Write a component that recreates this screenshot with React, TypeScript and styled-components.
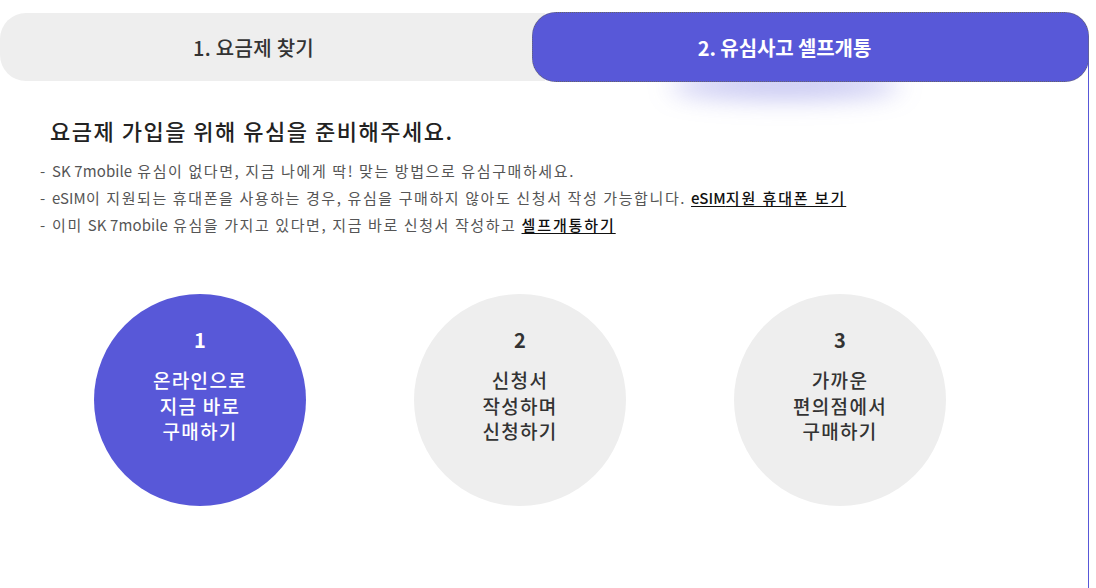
import styled, { createGlobalStyle } from 'styled-components';

const GlobalStyle = createGlobalStyle`
  html, body {
    margin: 0;
    padding: 0;
    background: #fff;
  }
  body {
    font-family: "Noto Sans CJK KR", "Noto Sans", sans-serif;
    color: #333;
  }
`;

const Page = styled.div`
  width: 1096px;
  height: 588px;
  overflow: hidden;
  padding-top: 12px;
  box-sizing: border-box;
`;

const Tabs = styled.div`
  display: flex;
  position: relative;
  z-index: 2;
`;

const Tab = styled.div<{ $active?: boolean }>`
  position: relative;
  box-sizing: border-box;
  height: 70px;
  display: flex;
  align-items: center;
  justify-content: center;
  font-size: 20px;
  ${({ $active }) =>
    $active
      ? `
    flex: 0 0 557px;
    margin-left: -13px;
    padding-right: 52px;
    background: #5858d8;
    color: #fff;
    font-weight: 700;
    letter-spacing: -0.1px;
    border: 1px dotted #666;
    border-radius: 24px;
    &::after {
      content: '';
      position: absolute;
      left: calc(50% - 26px);
      bottom: -16px;
      width: 230px;
      height: 24px;
      margin-left: -115px;
      border-radius: 50%;
      background: rgba(88, 88, 216, 0.4);
      filter: blur(13px);
      z-index: -1;
    }
  `
      : `
    flex: 0 0 545px;
    margin-top: 1px;
    height: 68px;
    padding-right: 38px;
    background: #eeeeee;
    color: #333;
    font-weight: 500;
    letter-spacing: 0.3px;
    border-radius: 26px 0 0 26px;
  `}
`;

const Panel = styled.div`
  width: 1089px;
  box-sizing: border-box;
  margin-top: -30px;
  padding: 63px 0 0 0;
  height: 600px;
  border-right: 1px solid #5858d8;
`;

const Heading = styled.h2`
  margin: 0 0 12px 50px;
  font-size: 22px;
  font-weight: 500;
  color: #222;
  letter-spacing: 1.5px;
  line-height: 30px;
`;

const Notes = styled.ul`
  list-style: none;
  margin: 0 0 0 40px;
  padding: 0;
`;

const Note = styled.li`
  font-size: 15px;
  line-height: 27px;
  color: #555;
  letter-spacing: 1.6px;
  &::before {
    content: '-';
    display: inline-block;
    width: 12px;
    letter-spacing: 0;
  }
`;

const En = styled.span`
  letter-spacing: 0.1px;
`;

const NoteLink = styled.a`
  color: #111;
  font-weight: 500;
  letter-spacing: 1.9px;
  text-decoration: underline;
  text-underline-offset: 2px;
`;

const Steps = styled.div`
  display: flex;
  gap: 108px;
  margin: 56px 0 0 94px;
`;

const Step = styled.div<{ $active?: boolean }>`
  position: relative;
  width: 212px;
  height: 212px;
  border-radius: 50%;
  display: flex;
  flex-direction: column;
  align-items: center;
  box-sizing: border-box;
  padding-top: 32px;
  background: ${({ $active }) => ($active ? '#5858d8' : '#eeeeee')};
  color: ${({ $active }) => ($active ? '#fff' : '#333')};
  ${({ $active }) =>
    $active &&
    `
    &::after {
      content: '';
      position: absolute;
      left: 50%;
      bottom: -16px;
      width: 100px;
      height: 28px;
      margin-left: -50px;
      border-radius: 50%;
      background: rgba(88, 88, 216, 0.5);
      filter: blur(11px);
      z-index: -1;
    }
  `}
`;

const StepNum = styled.div`
  font-size: 20px;
  font-weight: 700;
  line-height: 28px;
  margin-bottom: 13px;
`;

const StepText = styled.div`
  font-size: 19px;
  font-weight: 500;
  line-height: 25.5px;
  text-align: center;
  letter-spacing: 1.3px;
`;

const steps = [
  { n: 1, lines: ['온라인으로', '지금 바로', '구매하기'] },
  { n: 2, lines: ['신청서', '작성하며', '신청하기'] },
  { n: 3, lines: ['가까운', '편의점에서', '구매하기'] },
];

export default function App() {
  return (
    <Page>
      <GlobalStyle />
      <Tabs>
        <Tab>1. 요금제 찾기</Tab>
        <Tab $active>2. 유심사고 셀프개통</Tab>
      </Tabs>
      <Panel>
        <Heading>요금제 가입을 위해 유심을 준비해주세요.</Heading>
        <Notes>
          <Note>
            <En>SK 7mobile</En> 유심이 없다면, 지금 나에게 딱! 맞는 방법으로 유심구매하세요.
          </Note>
          <Note>
            <En>eSIM</En>이 지원되는 휴대폰을 사용하는 경우, 유심을 구매하지 않아도 신청서 작성 가능합니다.{' '}
            <NoteLink href="#">
              <En>eSIM</En>지원 휴대폰 보기
            </NoteLink>
          </Note>
          <Note>
            이미 <En>SK 7mobile</En> 유심을 가지고 있다면, 지금 바로 신청서 작성하고{' '}
            <NoteLink href="#">셀프개통하기</NoteLink>
          </Note>
        </Notes>
        <Steps>
          {steps.map((s) => (
            <Step key={s.n} $active={s.n === 1}>
              <StepNum>{s.n}</StepNum>
              <StepText>
                {s.lines.map((l) => (
                  <div key={l}>{l}</div>
                ))}
              </StepText>
            </Step>
          ))}
        </Steps>
      </Panel>
    </Page>
  );
}
